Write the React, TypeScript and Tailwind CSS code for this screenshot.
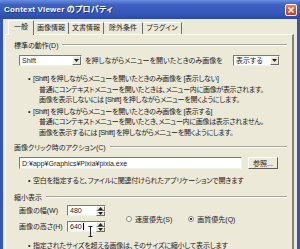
const baseFont =
  "font-['Liberation_Sans','Noto_Sans_CJK_JP',sans-serif] [font-feature-settings:'palt']";

export default function App() {
  return (
    <div
      className={`w-[300px] h-[249px] overflow-hidden bg-[#ece9d8] flex flex-col text-[7px] text-[#1c1c1c] ${baseFont}`}
    >
      <TitleBar />
      <div className="flex-1 min-h-0 flex flex-col border-x-[3px] border-[#3556b5] pt-[1px]">
        <Tabs />
        <Panel />
      </div>
    </div>
  );
}

function TitleBar() {
  return (
    <div className="h-[19px] shrink-0 flex items-center pl-[4px] pr-[3px] bg-[linear-gradient(to_bottom,#6a8ee0,#3d60c2_25%,#3557b8_70%,#2b4aa3)]">
      <span className="flex-1 text-white font-bold text-[8px] tracking-[0.2px] whitespace-nowrap [text-shadow:1px_1px_0_#1d3478]">
        Context Viewer のプロパティ
      </span>
      <div className="w-[12px] h-[12px] rounded-[2px] border border-white bg-[linear-gradient(to_bottom,#e9835a,#d2522a_60%,#c0431e)] flex items-center justify-center">
        <svg width="8" height="8" viewBox="0 0 8 8">
          <path d="M1.5 1.5 L6.5 6.5 M6.5 1.5 L1.5 6.5" stroke="white" strokeWidth="1.6" />
        </svg>
      </div>
    </div>
  );
}

const tabs = [
  { label: "一般", w: "w-[26px]" },
  { label: "画像情報", w: "w-[35px]" },
  { label: "文書情報", w: "w-[35px]" },
  { label: "除外条件", w: "w-[39px]" },
  { label: "プラグイン", w: "w-[39px]" },
];

function Tabs() {
  return (
    <div className="h-[14px] shrink-0 flex items-end pl-[5px] relative z-10">
      {tabs.map((t, i) =>
        i === 0 ? (
          <div
            key={t.label}
            className={`${t.w} h-[15px] -mb-[1px] bg-[#ece9d8] border-t border-l border-white border-r border-r-[#6e6e66] rounded-t-[1px] flex items-center justify-center pb-[1px]`}
          >
            {t.label}
          </div>
        ) : (
          <div
            key={t.label}
            className={`${t.w} h-[12px] bg-[#ece9d8] border-t border-white border-r border-r-[#6e6e66] flex items-center justify-center whitespace-nowrap`}
          >
            {t.label}
          </div>
        )
      )}
    </div>
  );
}

function Group({ label, className = "" }: { label: string; className?: string }) {
  return (
    <div className={`h-[10px] flex items-center ${className}`}>
      <span className="whitespace-nowrap leading-none">{label}</span>
      <div className="flex-1 ml-[4px] h-[2px] border-t border-[#a6a498] border-b border-b-white" />
    </div>
  );
}

function Arrow() {
  return (
    <svg width="5" height="3" viewBox="0 0 5 3">
      <path d="M0 0 H5 L2.5 3 Z" fill="#222" />
    </svg>
  );
}

function Select({ value, w }: { value: string; w: string }) {
  return (
    <div
      className={`${w} h-[11px] shrink-0 bg-white border border-t-[#7c7a70] border-l-[#7c7a70] border-r-[#f2f1ea] border-b-[#f2f1ea] flex items-center`}
    >
      <span className="flex-1 pl-[2px] leading-none whitespace-nowrap">{value}</span>
      <div className="w-[9px] h-[9px] bg-[#ece9d8] border border-t-white border-l-white border-r-[#6e6e66] border-b-[#6e6e66] flex items-center justify-center">
        <Arrow />
      </div>
    </div>
  );
}

function Bullet({ lines, className = "" }: { lines: string[]; className?: string }) {
  return (
    <div className={`leading-[10.5px] whitespace-nowrap tracking-[-0.3px] ${className}`}>
      {lines.map((l, i) =>
        i === 0 ? (
          <div key={i} className="pl-[16px] flex">
            <span className="w-[5px]">•</span>
            <span>{l}</span>
          </div>
        ) : (
          <div key={i} className="pl-[27px]">
            {l}
          </div>
        )
      )}
    </div>
  );
}

function Spin({ value, cursor }: { value: string; cursor?: boolean }) {
  return (
    <div className="w-[39px] h-[11px] bg-white border border-t-[#7c7a70] border-l-[#7c7a70] border-r-[#f2f1ea] border-b-[#f2f1ea] flex items-center relative">
      <span className="flex-1 pl-[2px] leading-none flex items-center">
        {value}
        {cursor && <span className="w-px h-[7px] bg-black ml-px" />}
      </span>
      <div className="w-[9px] h-full flex flex-col">
        <div className="flex-1 bg-[#ece9d8] border-t border-l border-white border-r border-b border-r-[#6e6e66] border-b-[#6e6e66] flex items-center justify-center">
          <svg width="5" height="3" viewBox="0 0 5 3">
            <path d="M0 3 H5 L2.5 0 Z" fill="#222" />
          </svg>
        </div>
        <div className="flex-1 bg-[#ece9d8] border-t border-l border-white border-r border-b border-r-[#6e6e66] border-b-[#6e6e66] flex items-center justify-center">
          <Arrow />
        </div>
      </div>
      {cursor && (
        <svg
          className="absolute left-[20px] top-[4px]"
          width="5"
          height="11"
          viewBox="0 0 5 11"
        >
          <path d="M0.5 0.5 H4.5 M2.5 0.5 V10.5 M0.5 10.5 H4.5" stroke="#222" strokeWidth="1" fill="none" />
        </svg>
      )}
    </div>
  );
}

function Radio({ checked, label }: { checked?: boolean; label: string }) {
  return (
    <div className="flex items-center">
      <div className="w-[6px] h-[6px] rounded-full bg-white border border-[#8a887c] flex items-center justify-center">
        {checked && <div className="w-[2px] h-[2px] rounded-full bg-black" />}
      </div>
      <span className="ml-[3px] whitespace-nowrap leading-none">{label}</span>
    </div>
  );
}

function Panel() {
  return (
    <div className="flex-1 ml-[2px] mr-[3px] border-t border-l border-white border-r-2 border-r-[#85837a] pl-[8px] pr-[5px] flex flex-col">
      <Group label="標準の動作(D)" className="mt-[5px]" />

      <div className="mt-[5px] h-[11px] flex items-center pl-[5px]">
        <Select value="Shift" w="w-[63px]" />
        <span className="w-[148px] ml-[3px] whitespace-nowrap leading-none">
          を押しながらメニューを開いたときのみ画像を
        </span>
        <Select value="表示する" w="w-[47px]" />
      </div>

      <div className="-ml-[2px] mt-[8px]">
        <Bullet
          lines={[
            "[Shift] を押しながらメニューを開いたときのみ画像を [表示しない]",
            "普通にコンテキストメニューを開いたときは、メニュー内に画像が表示されます。",
            "画像を表示しないには [Shift] を押しながらメニューを開くようにします。",
          ]}
        />
        <Bullet
          className="mt-[1px]"
          lines={[
            "[Shift] を押しながらメニューを開いたときのみ画像を [表示する]",
            "普通にコンテキストメニューを開いたとき、メニュー内に画像は表示されません。",
            "画像を表示するには [Shift] を押しながらメニューを開くようにします。",
          ]}
        />
      </div>

      <Group label="画像クリック時のアクション(C)" className="mt-[4px]" />

      <div className="mt-[5px] h-[12px] flex pl-[5px]">
        <div className="w-[223px] h-full bg-white border border-t-[#7c7a70] border-l-[#7c7a70] border-r-[#f2f1ea] border-b-[#f2f1ea] flex items-center pl-[2px] leading-none whitespace-nowrap">
          D:¥app¥Graphics¥Pixia¥pixia.exe
        </div>
        <div className="w-[30px] h-full ml-[6px] bg-[#ece9d8] border border-t-white border-l-white border-r-[#5e5e58] border-b-[#5e5e58] flex items-center justify-center leading-none">
          参照...
        </div>
      </div>

      <div className="mt-[7px] leading-[10px] -ml-[2px] tracking-[-0.2px]">
        <div className="pl-[16px] flex whitespace-nowrap">
          <span className="w-[5px]">•</span>
          <span>空白を指定すると、ファイルに関連付けられたアプリケーションで開きます</span>
        </div>
      </div>

      <Group label="縮小表示" className="mt-[6px]" />

      <div className="mt-[3px] flex items-center pl-[5px]">
        <div className="flex flex-col gap-[5px]">
          <div className="h-[11px] flex items-center">
            <span className="w-[48px] leading-none whitespace-nowrap">画像の幅(W)</span>
            <Spin value="480" />
          </div>
          <div className="h-[11px] flex items-center">
            <span className="w-[48px] leading-none whitespace-nowrap">画像の高さ(H)</span>
            <Spin value="640" cursor />
          </div>
        </div>
        <div className="ml-[20px] flex items-center gap-[16px] mt-[1px]">
          <Radio label="速度優先(S)" />
          <Radio label="画質優先(Q)" checked />
        </div>
      </div>

      <div className="mt-[9px] leading-[10px] -ml-[2px] tracking-[-0.2px]">
        <div className="pl-[16px] flex whitespace-nowrap">
          <span className="w-[5px]">•</span>
          <span>指定されたサイズを超える画像は、そのサイズに縮小して表示します</span>
        </div>
      </div>
    </div>
  );
}
